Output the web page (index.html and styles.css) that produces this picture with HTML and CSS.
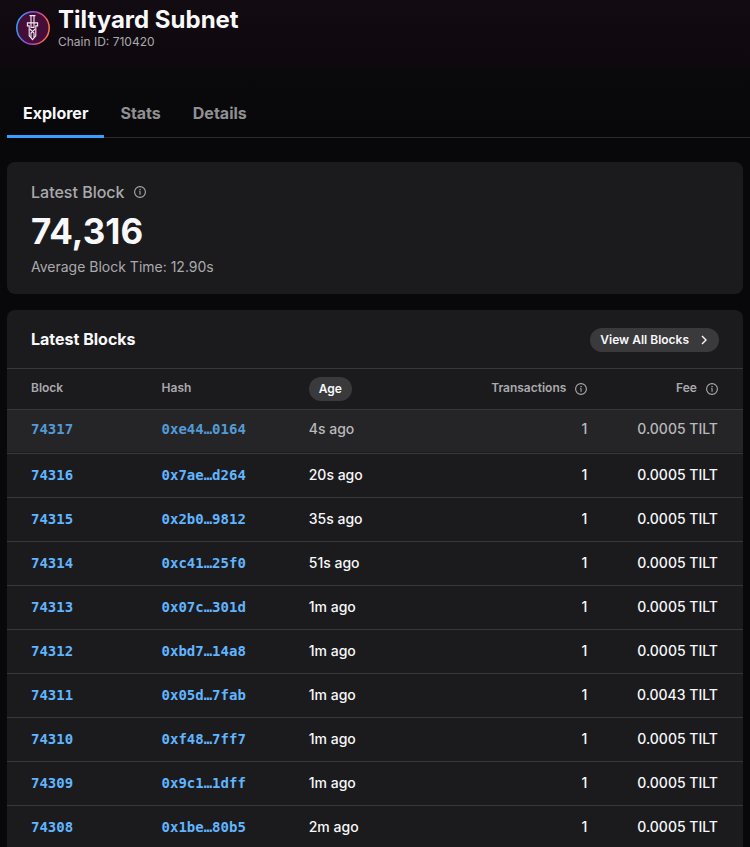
FILE: index.html
```html
<!DOCTYPE html>
<html lang="en">
<head>
<meta charset="utf-8">
<meta name="viewport" content="width=device-width, initial-scale=1">
<title>Tiltyard Subnet</title>
<link rel="stylesheet" href="styles.css">
</head>
<body>
<svg class="sprite" aria-hidden="true">
  <symbol id="info" viewBox="0 0 12 12">
    <circle cx="6" cy="6" r="5.4" fill="none" stroke="currentColor" stroke-width="1.1"/>
    <path d="M5.4 3h1.3v1.2H5.4zM5 5.2h1.6v3.6H5.5V6H5z" fill="currentColor"/>
  </symbol>
</svg>
<header class="chain">
  <svg class="logo" viewBox="0 0 34 34" aria-hidden="true">
    <defs>
      <linearGradient id="ring" x1="0" y1="0.4" x2="1" y2="0.6">
        <stop offset="0" stop-color="#2aa5ff"/>
        <stop offset="0.5" stop-color="#a83fc4"/>
        <stop offset="0.8" stop-color="#f2566a"/>
        <stop offset="1" stop-color="#ff7848"/>
      </linearGradient>
    </defs>
    <circle cx="17" cy="17" r="16.2" fill="#440e39" stroke="url(#ring)" stroke-width="1.5"/>
    <g fill="none" stroke="#f4e9f2" stroke-width="1.1">
      <path d="M13.5 4.6h6M15 5v6.5M18 5v6.5M11.4 11.9h10.2v3h-1.8v9.8L16.5 28.6l-3.3-3.9v-9.8h-1.8z"/>
      <path d="M15 12v4.4h3V12M14 18l2.5 2.6 2.5-2.6M15 26.5V22l1.5-1.5L18 22v4.5"/>
    </g>
  </svg>
  <div>
    <h1>Tiltyard Subnet</h1>
    <p>Chain ID: 710420</p>
  </div>
</header>
<nav class="tabs">
  <a class="active" href="#explorer" aria-current="page">Explorer</a>
  <a href="#stats">Stats</a>
  <a href="#details">Details</a>
</nav>
<main id="explorer">
  <section class="card summary">
    <h2>Latest Block <svg class="info"><use href="#info"/></svg></h2>
    <p class="height">74,316</p>
    <p class="average">Average Block Time: 12.90s</p>
  </section>
  <section class="card blocks">
    <div class="bar">
      <h2>Latest Blocks</h2>
      <a class="pill" href="#blocks">View All Blocks
        <svg class="chevron" viewBox="0 0 10 10" aria-hidden="true"><path d="M3 1l4 4-4 4" fill="none" stroke="currentColor" stroke-width="1.4"/></svg>
      </a>
    </div>
    <table>
      <colgroup><col class="c-block"><col class="c-hash"><col class="c-age"><col class="c-tx"><col class="c-fee"></colgroup>
      <thead>
        <tr><th>Block</th><th>Hash</th><th><button class="pill" type="button">Age</button></th><th class="num">Transactions <svg class="info"><use href="#info"/></svg></th><th class="num">Fee <svg class="info"><use href="#info"/></svg></th></tr>
      </thead>
      <tbody>
        <tr class="incoming"><td><a href="#74317">74317</a></td><td><a href="#74317">0xe44…0164</a></td><td>4s ago</td><td class="num">1</td><td class="num">0.0005 TILT</td></tr>
        <tr><td><a href="#74316">74316</a></td><td><a href="#74316">0x7ae…d264</a></td><td>20s ago</td><td class="num">1</td><td class="num">0.0005 TILT</td></tr>
        <tr><td><a href="#74315">74315</a></td><td><a href="#74315">0x2b0…9812</a></td><td>35s ago</td><td class="num">1</td><td class="num">0.0005 TILT</td></tr>
        <tr><td><a href="#74314">74314</a></td><td><a href="#74314">0xc41…25f0</a></td><td>51s ago</td><td class="num">1</td><td class="num">0.0005 TILT</td></tr>
        <tr><td><a href="#74313">74313</a></td><td><a href="#74313">0x07c…301d</a></td><td>1m ago</td><td class="num">1</td><td class="num">0.0005 TILT</td></tr>
        <tr><td><a href="#74312">74312</a></td><td><a href="#74312">0xbd7…14a8</a></td><td>1m ago</td><td class="num">1</td><td class="num">0.0005 TILT</td></tr>
        <tr><td><a href="#74311">74311</a></td><td><a href="#74311">0x05d…7fab</a></td><td>1m ago</td><td class="num">1</td><td class="num">0.0043 TILT</td></tr>
        <tr><td><a href="#74310">74310</a></td><td><a href="#74310">0xf48…7ff7</a></td><td>1m ago</td><td class="num">1</td><td class="num">0.0005 TILT</td></tr>
        <tr><td><a href="#74309">74309</a></td><td><a href="#74309">0x9c1…1dff</a></td><td>1m ago</td><td class="num">1</td><td class="num">0.0005 TILT</td></tr>
        <tr><td><a href="#74308">74308</a></td><td><a href="#74308">0x1be…80b5</a></td><td>2m ago</td><td class="num">1</td><td class="num">0.0005 TILT</td></tr>
      </tbody>
    </table>
  </section>
</main>
</body>
</html>
```
FILE: styles.css
```css
* { box-sizing: border-box; }

body {
  margin: 0;
  background: #08080a linear-gradient(#120b12, #0f090f 60px, #0a090b 72px, #08080a 130px) no-repeat;
  color: #f8f8fb;
  font-family: Inter, "Liberation Sans", sans-serif;
  font-size: 14px;
  line-height: 20px;
}

h1, h2, p { margin: 0; }
a { color: inherit; text-decoration: none; }
.sprite { display: none; }

.chain {
  display: flex;
  align-items: center;
  gap: 8px;
  padding: 6px 16px 0;
}
.logo { width: 34px; height: 34px; }
.chain h1 { font-size: 24px; line-height: 28px; font-weight: 700; }
.chain p { font-size: 12px; line-height: 16px; color: #aaaaae; }

.tabs {
  display: flex;
  margin: 40px 0 0 7px;
  border-bottom: 1px solid #2b2b2d;
}
.tabs a {
  padding: 12px 16px 11px;
  margin-bottom: -1px;
  border-bottom: 3px solid transparent;
  color: #909093;
  font-size: 16px;
  line-height: 22px;
  font-weight: 700;
}
.tabs .active { color: #f8f8fb; border-color: #389fff; }

main { padding: 24px 7px; }
.card { background: #1b1b1d; border-radius: 8px; }
.card + .card { margin-top: 16px; }

.info {
  width: 12px;
  height: 12px;
  margin-left: 6px;
  vertical-align: -3px;
}

.summary { padding: 20px 24px 18px; color: #aaaaae; }
.summary h2 { font-size: 16px; line-height: 20px; font-weight: 500; }
.summary .info { vertical-align: 0; margin-left: 5px; }
.summary .height {
  margin: 9px 0 6px;
  color: #f8f8fb;
  font-size: 35px;
  line-height: 40px;
  font-weight: 700;
}
.summary .average { line-height: 19px; }

.blocks { padding-bottom: 8px; }
.bar {
  display: flex;
  align-items: center;
  justify-content: space-between;
  padding: 18px 24px 16px;
}
.bar h2 { font-size: 16px; line-height: 22px; padding-bottom: 2px; font-weight: 700; }

.pill {
  display: inline-flex;
  align-items: center;
  gap: 10px;
  height: 24px;
  padding: 0 10px;
  border: 0;
  border-radius: 12px;
  background: #3a3a3c;
  color: #f8f8fb;
  font: 600 12px/24px Inter, "Liberation Sans", sans-serif;
}
.chevron { width: 10px; height: 10px; }

table { width: 100%; table-layout: fixed; border-collapse: separate; border-spacing: 0; }
.c-block { width: 21%; }
.c-hash { width: 20%; }
.c-age { width: 16%; }
.c-tx { width: 22%; }
.c-fee { width: 21%; }

th, td {
  padding: 0 0 2px;
  border-top: 1px solid #38383a;
  text-align: left;
  white-space: nowrap;
}
th { height: 41px; color: #aaaaae; font-size: 12px; font-weight: 600; }
th:has(.pill) { padding-bottom: 0; }
td { height: 44px; font-weight: 500; }
th:first-child, td:first-child { padding-left: 24px; }
.num { padding-right: 1px; text-align: right; }
.num:last-child { padding-right: 25px; }

td a {
  color: #61b5ff;
  font-family: "DejaVu Sans Mono", monospace;
  font-weight: 700;
}

.incoming td {
  padding-bottom: 6px;
  background: linear-gradient(#252527 0 42px, #1b1b1d 42px);
  color: #b9b9bc;
}
.incoming a { color: #539bd6; }
```
